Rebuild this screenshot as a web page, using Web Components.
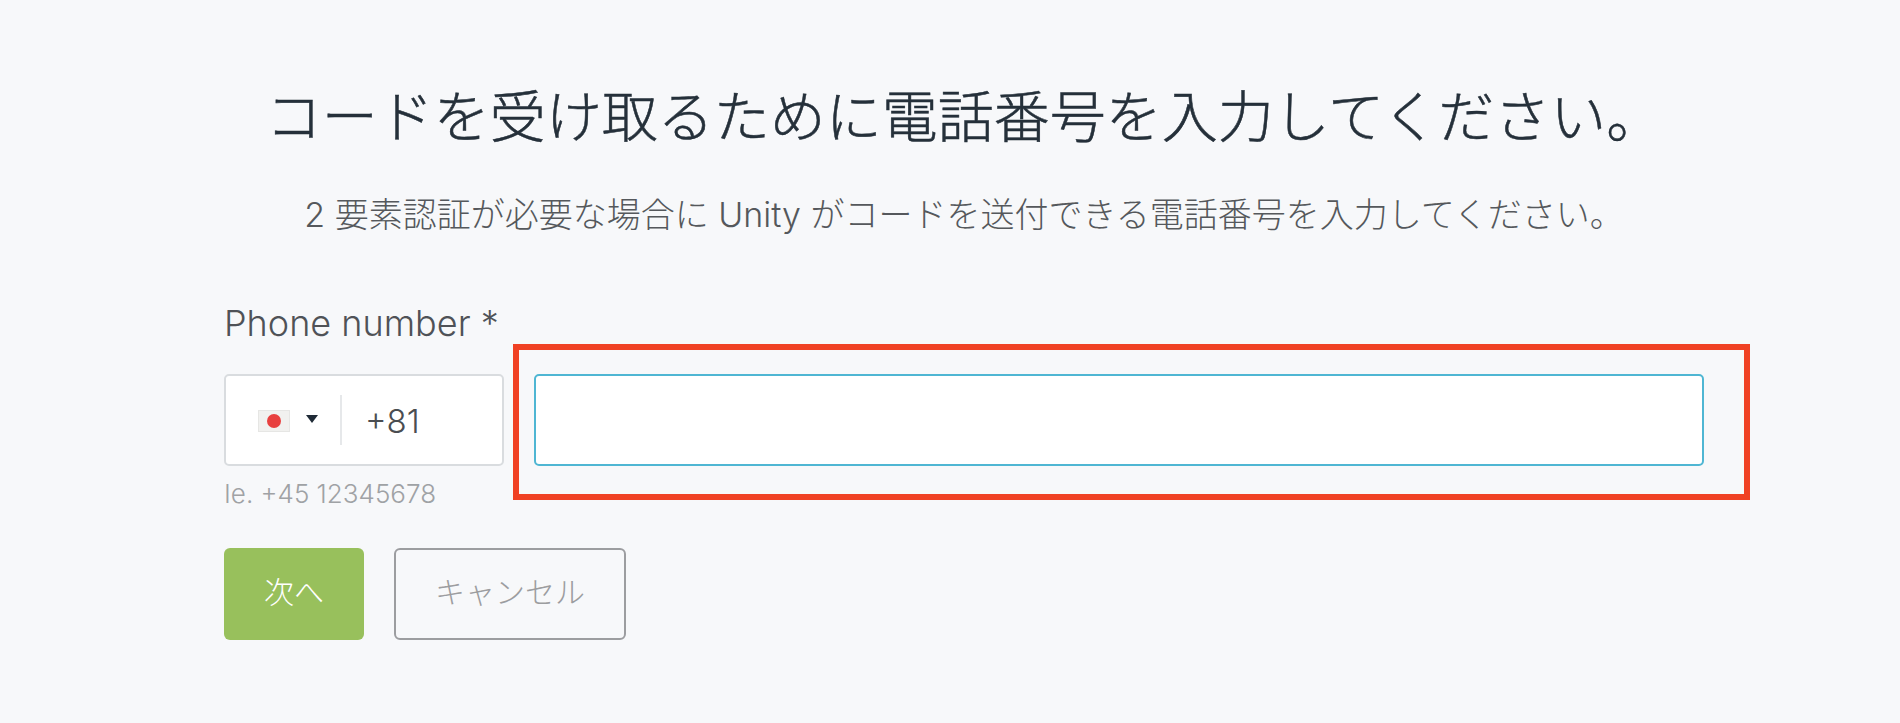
<!DOCTYPE html>
<html lang="ja">
<head>
<meta charset="utf-8">
<title>Phone number</title>
<style>
html, body { margin: 0; height: 100%; background: #f7f8fa; }
</style>
</head>
<body>
<phone-page>
  <span slot="title">コードを受け取るために電話番号を入力してください。</span>
  <span slot="intro">2 要素認証が必要な場合に Unity がコードを送付できる電話番号を入力してください。</span>
  <phone-field label="Phone number *" hint="Ie. +45 12345678" code="+81"></phone-field>
  <div slot="actions">
    <ui-button kind="primary">次へ</ui-button>
    <ui-button kind="outline">キャンセル</ui-button>
  </div>
</phone-page>

<script>
const FONT = `Inter, "Noto Sans CJK JP", sans-serif`;

class PhonePage extends HTMLElement {
    constructor() {
        super();
        this.shadowDOM = this.attachShadow({mode: 'open'});
        this.shadowDOM.innerHTML = `
        <style>
        :host {
            display: block;
            box-sizing: border-box;
            width: 1900px;
            height: 723px;
            padding: 76px 196px 0 224px;
            background: #f7f8fa;
            font-family: ${FONT};
            overflow: hidden;
        }
        h1 {
            margin: 0;
            font-size: 56px;
            line-height: 82px;
            font-weight: 300;
            -webkit-text-stroke: .5px #25303a;
            color: #25303a;
            text-align: center;
        }
        p {
            margin: 33px 0 0;
            font-size: 34px;
            line-height: 48px;
            font-weight: 300;
            color: #55585c;
            text-align: center;
        }
        .field {
            margin-top: 62px;
        }
        .actions {
            margin-top: 35px;
        }
        ::slotted([slot="actions"]) {
            display: flex;
            gap: 30px;
        }
        </style>
        <h1><slot name="title"></slot></h1>
        <p><slot name="intro"></slot></p>
        <div class="field"><slot></slot></div>
        <div class="actions"><slot name="actions"></slot></div>
        `;
    }
}

class PhoneField extends HTMLElement {
    constructor() {
        super();
        this.shadowDOM = this.attachShadow({mode: 'open'});
    }

    connectedCallback() {
        this.render();
    }

    render() {
        this.shadowDOM.innerHTML = `
        <style>
        :host {
            display: block;
        }
        label {
            display: block;
            font-size: 36px;
            line-height: 44px;
            font-weight: 300;
            color: #4f5257;
            margin-bottom: 29px;
        }
        .row {
            display: flex;
            gap: 30px;
        }
        .country {
            box-sizing: border-box;
            width: 280px;
            height: 92px;
            display: flex;
            align-items: center;
            background: #fff;
            border: 2px solid #d9dcdf;
            border-radius: 5px;
            padding: 2px 0 0 32px;
        }
        .flag {
            width: 32px;
            height: 22px;
            background: #f1f1ef;
            box-shadow: inset 0 0 0 1px #e6e6e4;
            display: flex;
            align-items: center;
            justify-content: center;
            filter: blur(.6px);
        }
        .flag i {
            display: block;
            width: 14px;
            height: 14px;
            border-radius: 50%;
            background: #e8403f;
        }
        .caret {
            width: 0;
            height: 0;
            margin: -5px 1px 0 16px;
            border-left: 6px solid transparent;
            border-right: 6px solid transparent;
            border-top: 8px solid #1f2a36;
        }
        .sep {
            width: 2px;
            height: 50px;
            margin: -2px 23px 0 21px;
            background: #e6e8ea;
        }
        .code {
            font-size: 33px;
            font-weight: 300;
            color: #4a4d51;
        }
        .number {
            position: relative;
            flex: 1;
            height: 92px;
        }
        input {
            box-sizing: border-box;
            display: block;
            width: 100%;
            height: 100%;
            background: #fff;
            border: 2px solid #4fb6d3;
            border-radius: 5px;
            outline: none;
        }
        .mark {
            position: absolute;
            left: -21px;
            top: -30px;
            right: -46px;
            bottom: -34px;
            border: 6px solid #f04124;
            pointer-events: none;
        }
        .hint {
            margin-top: 9px;
            font-size: 26px;
            line-height: 38px;
            font-weight: 300;
            color: #9fa2a5;
        }
        </style>
        <label>${this.getAttribute('label')}</label>
        <div class="row">
            <div class="country">
                <span class="flag"><i></i></span>
                <span class="caret"></span>
                <span class="sep"></span>
                <span class="code">${this.getAttribute('code')}</span>
            </div>
            <div class="number">
                <input type="tel" aria-label="${this.getAttribute('label')}">
                <div class="mark"></div>
            </div>
        </div>
        <div class="hint">${this.getAttribute('hint')}</div>
        `;
    }
}

class UiButton extends HTMLElement {
    constructor() {
        super();
        this.shadowDOM = this.attachShadow({mode: 'open'});
        this.shadowDOM.innerHTML = `
        <style>
        :host {
            display: block;
        }
        button {
            box-sizing: border-box;
            height: 92px;
            border-radius: 6px;
            font-family: ${FONT};
            font-size: 30px;
            font-weight: 300;
            padding: 0 0 8px;
            cursor: pointer;
        }
        :host([kind="primary"]) button {
            width: 140px;
            background: #98c05c;
            border: none;
            color: #fff;
        }
        :host([kind="outline"]) button {
            width: 232px;
            background: transparent;
            border: 2px solid #9c9da0;
            color: #9c9da0;
        }
        </style>
        <button type="button"><slot></slot></button>
        `;
    }
}

customElements.define("phone-page", PhonePage);
customElements.define("phone-field", PhoneField);
customElements.define("ui-button", UiButton);
</script>
</body>
</html>
